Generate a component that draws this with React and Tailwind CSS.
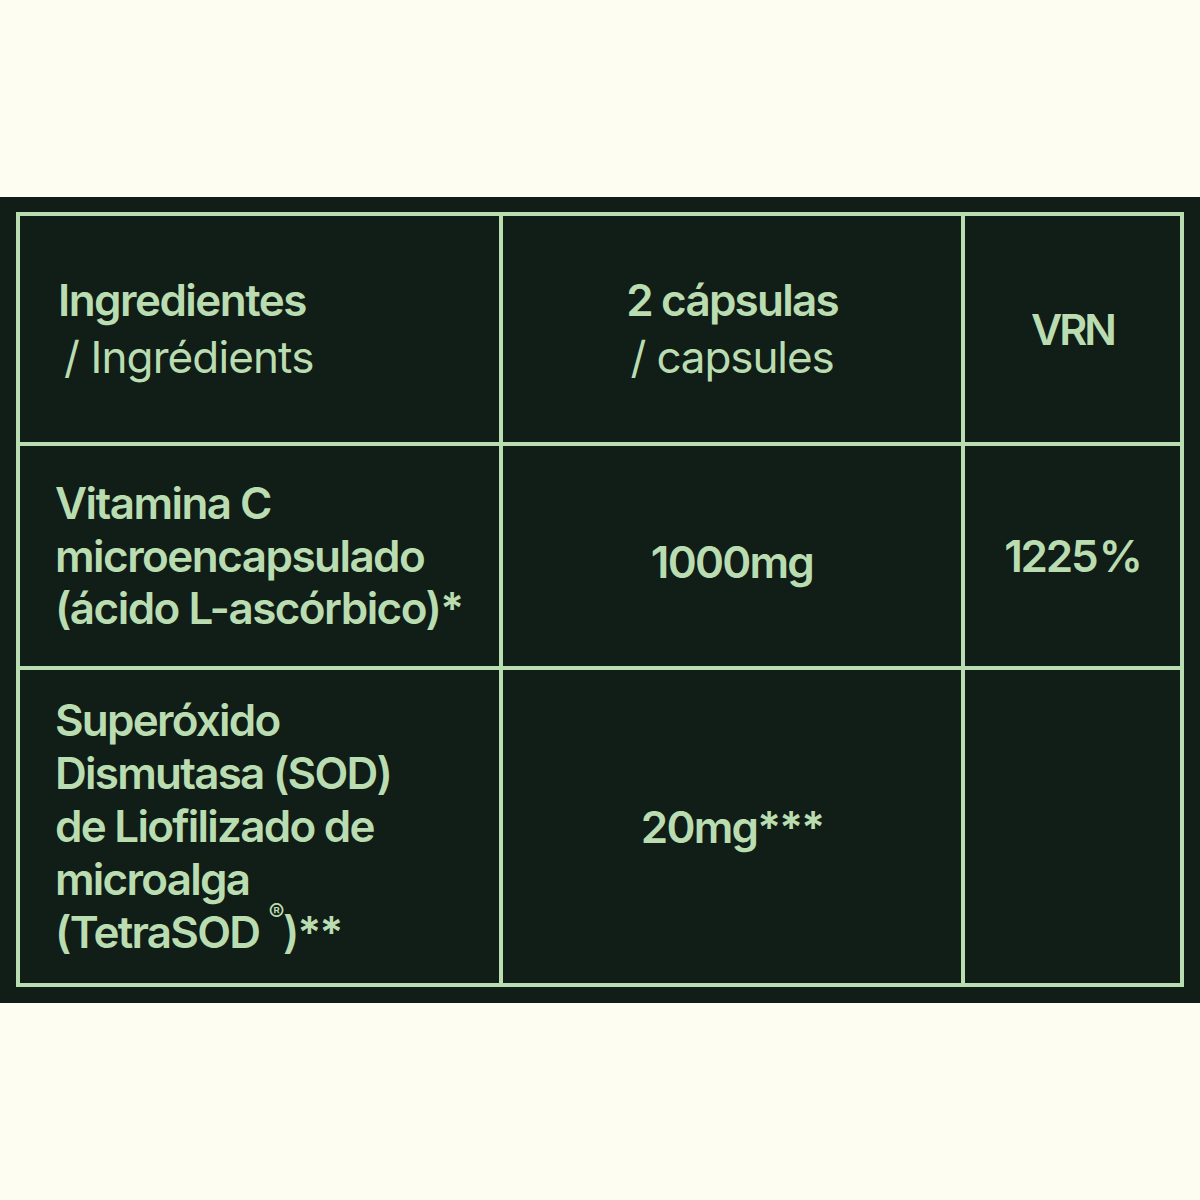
export default function App() {
  const font = { fontFamily: 'Inter, "Noto Sans", sans-serif' };
  const cell = "bg-[#111d17] flex items-center";
  return (
    <div className="w-[1200px] h-[1200px] bg-[#fdfdf1] pt-[197px]" style={font}>
      <div className="bg-[#111d17] px-[16px] pt-[15px] pb-[16px]">
        <div className="bg-[#b9dcb0] p-[4px] grid grid-cols-[479px_458px_215px] grid-rows-[226px_220px_313px] gap-[4px] text-[#b9dcb0]">
          <div className={cell + " pl-[38px]"}>
            <div className="text-[44px] leading-[57px]">
              <div className="font-semibold tracking-[-0.035em]">Ingredientes</div>
              <div className="font-normal pl-[6px] tracking-[-0.02em]">/ Ingrédients</div>
            </div>
          </div>
          <div className={cell + " justify-center text-center"}>
            <div className="text-[44px] leading-[57px]">
              <div className="font-semibold tracking-[-0.04em]">2 cápsulas</div>
              <div className="font-normal tracking-[-0.025em]">/ capsules</div>
            </div>
          </div>
          <div className={cell + " justify-center"}>
            <div className="text-[43px] leading-[57px] font-semibold tracking-[-0.07em]">VRN</div>
          </div>

          <div className={cell + " pl-[35px]"}>
            <div className="text-[44px] leading-[52.5px] font-semibold tracking-[-0.035em]">
              <div>Vitamina C</div>
              <div>microencapsulado</div>
              <div>(ácido L-ascórbico)*</div>
            </div>
          </div>
          <div className={cell + " justify-center"}>
            <div className="text-[44px] leading-[52px] font-semibold tracking-[-0.04em] pt-[12px]">1000mg</div>
          </div>
          <div className={cell + " justify-center"}>
            <div className="text-[44px] leading-[52px] font-semibold tracking-[-0.05em]">1225<span className="tracking-[-0.2em]"> </span>%</div>
          </div>

          <div className={cell + " pl-[35px]"}>
            <div className="text-[44px] leading-[53px] font-semibold tracking-[-0.04em]">
              <div>Superóxido</div>
              <div>Dismutasa (SOD)</div>
              <div>de Liofilizado de</div>
              <div>microalga</div>
              <div>(TetraSOD <sup className="text-[24px] align-[15px] font-normal">®</sup>)**</div>
            </div>
          </div>
          <div className={cell + " justify-center"}>
            <div className="text-[44px] leading-[52px] font-semibold tracking-[-0.04em]">20mg***</div>
          </div>
          <div className={cell}></div>
        </div>
      </div>
    </div>
  );
}
